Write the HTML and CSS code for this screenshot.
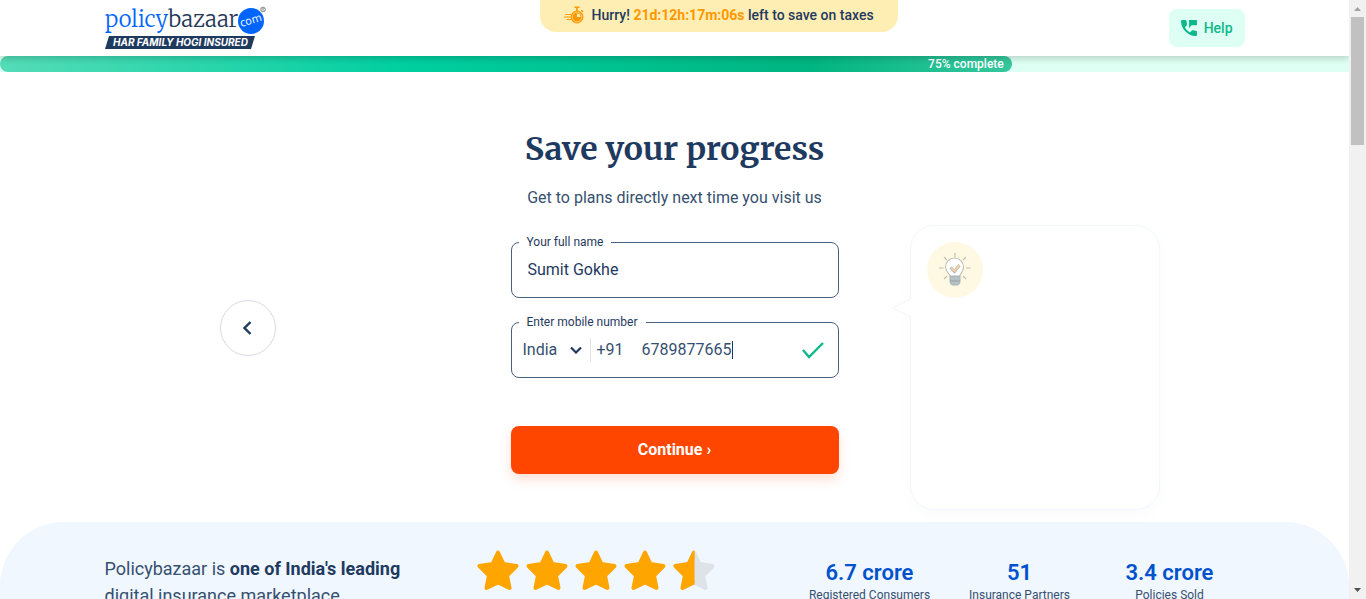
FILE: index.html
```html
<!DOCTYPE html>
<html lang="en">
<head>
<meta charset="utf-8">
<meta name="viewport" content="width=device-width, initial-scale=1">
<title>Policybazaar - Save your progress</title>
<link rel="stylesheet" href="styles.css">
</head>
<body>
<div class="page">
  <header class="header">
    <div class="container header-row">
      <a class="logo" href="#" aria-label="policybazaar.com">
        <svg width="162" height="46" viewBox="0 0 162 46">
          <text class="logo-name" x="0" y="22"><tspan fill="#0065ff">policy</tspan><tspan fill="#253858">bazaar</tspan></text>
          <circle cx="146" cy="16" r="13" fill="#0065ff"/>
          <text class="logo-com" x="146" y="19" transform="rotate(-17 146 16)">com</text>
          <circle cx="158" cy="4.500" r="2.300" fill="none" stroke="#555" stroke-width=".7"/>
          <text class="logo-reg" x="158" y="6">R</text>
          <path d="M4 31h146l-4 13H0z" fill="#1f3a5f"/>
          <text class="logo-tag" x="8" y="41">HAR FAMILY HOGI INSURED</text>
        </svg>
      </a>
      <a class="help" href="#">
        <svg width="16" height="16" viewBox="0 0 24 24" fill="#0db88b"><path d="M22.500 16l-4.600-.6c-.6-.1-1.200.1-1.600.5l-3 3A19 19 0 0 1 5.800 10.800l2.700-2.700c.4-.4.6-1 .5-1.600L8.400 2.100C8.300 1 7.400 0 6.300 0H2C.8 0 0 1 0 2.100 .7 14 10 23.300 21.900 24c1.100 0 2.100-.8 2.100-2v-4.100c0-1-.6-1.800-1.500-1.900zM12 0v12l4-4h6.500c.8 0 1.500-.7 1.500-1.500v-5c0-.8-.7-1.500-1.500-1.500z"/></svg>
        Help
      </a>
    </div>
    <p class="offer">
      <svg width="20" height="18" viewBox="0 0 20 18">
        <g fill="none" stroke="#ff9800">
          <circle cx="13" cy="11" r="6" fill="#ff9800" stroke-width="1"/>
          <circle cx="13" cy="11" r="4.800" stroke="#ffeeb3" stroke-width=".6"/>
          <path d="M10.500 1.300h5M13 1v4M17.300 4.300l1.800 1.700" stroke-width="1.600"/>
          <path d="M1.500 8.500H7M0 11h6.500M2.500 13.500H7" stroke-width="1"/>
        </g>
        <path d="M13 7.500V11h3.500A3.500 3.500 0 0 0 13 7.500z" fill="#ffeeb3"/>
      </svg>
      <span>Hurry! <strong>21d:12h:17m:06s</strong> left to save on taxes</span>
    </p>
  </header>
  <div class="progress" role="progressbar" aria-valuenow="75" aria-valuemin="0" aria-valuemax="100">
    <div class="progress-fill" style="width: 75%">75% complete</div>
  </div>
  <main class="container main">
    <button class="back" type="button" aria-label="Back">
      <svg width="12" height="16" viewBox="0 0 12 16"><path d="M8.500 2l-6 6 6 6" fill="none" stroke="#1f3a5f" stroke-width="2.400"/></svg>
    </button>
    <form class="form">
      <h1 class="title">Save your progress</h1>
      <p class="subtitle">Get to plans directly next time you visit us</p>
      <fieldset class="field">
        <legend><label for="name">Your full name</label></legend>
        <input class="input name-input" id="name" type="text" value="Sumit Gokhe">
      </fieldset>
      <fieldset class="field">
        <legend><label for="mobile">Enter mobile number</label></legend>
        <div class="phone">
          <span class="country">
            <select class="input" aria-label="Country"><option>India</option></select>
            <svg width="12" height="8" viewBox="0 0 12 8"><path d="M1 1.500l5 5 5-5" fill="none" stroke="#1f3a5f" stroke-width="2.200"/></svg>
          </span>
          <span class="code">+91</span>
          <span class="number"><input class="input number-input" id="mobile" type="tel" value="6789877665"><span class="caret"></span></span>
          <svg class="tick" width="24" height="18" viewBox="0 0 24 18"><path d="M2 9l6 7L22 2" fill="none" stroke="#0db88b" stroke-width="2.400"/></svg>
        </div>
      </fieldset>
      <button class="continue" type="button">Continue ›</button>
    </form>
    <aside class="tip">
      <svg class="tip-arrow" width="24" height="24" viewBox="0 0 24 24"><path d="M24 2.500H20L1.500 12l18.500 9h4z" fill="#fff"/><path d="M20 2.500L1.500 12l18.500 9" fill="none" stroke="#f0f6ff"/></svg>
      <div class="tip-icon">
        <svg width="32" height="34" viewBox="0 0 32 34">
          <g fill="none" stroke="#bfbcb2" stroke-width="1.100">
            <path d="M11.500 24c0-3-5-4.500-5-10a9 9 0 0 1 18 0c0 5.500-4 7-4 10z" fill="#fff"/>
            <path d="M16 0v4M5 4l3 3M27 4l-3 3M0 15h4.500M27 15h4.500M5 26l3-3M27 26l-3-3"/>
          </g>
          <path d="M11 23h10v5c0 2-1 4-2.500 4h-5C12 32 11 30 11 28z" fill="#b5c1c5" stroke="#a9b2b5"/>
          <path d="M11 28h10" stroke="#95a1a6"/>
          <path d="M11.500 14.500l4 4 5-6.500" fill="none" stroke="#b8b4ad" stroke-width="3"/>
          <path d="M12 15l3.500 3 5-6" fill="none" stroke="#ffd9a6" stroke-width="1.400"/>
        </svg>
      </div>
    </aside>
  </main>
  <section class="trust">
    <div class="container trust-row">
      <p class="trust-text">Policybazaar is <strong>one of India's leading</strong> digital insurance marketplace</p>
      <svg class="stars" width="240" height="44" viewBox="0 0 240 44" role="img" aria-label="4.5 out of 5 stars">
        <defs>
          <path id="star" d="M20 3.500L25.500 15l13 2-9.500 9.500L31.500 39 20 33.500 8.500 39 11 26.500 1.500 17l13-2z" transform="translate(1)" stroke-width="4" stroke-linejoin="round"/>
          <clipPath id="half"><path d="M-2 0h23.500v44H-2z"/></clipPath>
        </defs>
        <g fill="#ffa500" stroke="#ffa500">
          <use href="#star"/><use href="#star" x="49"/><use href="#star" x="98"/><use href="#star" x="147"/>
        </g>
        <g transform="translate(196)">
          <use href="#star" fill="#dde3e6" stroke="#dde3e6"/>
          <g clip-path="url(#half)"><use href="#star" fill="#ffa500" stroke="#ffa500"/></g>
        </g>
      </svg>
      <ul class="stats">
        <li><strong>6.7 crore</strong>Registered Consumers</li>
        <li><strong>51</strong>Insurance Partners</li>
        <li><strong>3.4 crore</strong>Policies Sold</li>
      </ul>
    </div>
  </section>
</div>
<div class="scrollbar" aria-hidden="true">
  <svg width="17" height="17" viewBox="0 0 17 17"><path d="M5 11h7L8.500 7z" fill="#a3a3a3"/></svg>
  <div class="scroll-thumb"></div>
  <svg width="17" height="17" viewBox="0 0 17 17"><path d="M5 6h7l-3.500 4z" fill="#505050"/></svg>
</div>
</body>
</html>
```
FILE: styles.css
```css
* {
  box-sizing: border-box;
}

body {
  margin: 0;
  display: flex;
  height: 100vh;
  overflow: hidden;
  font-family: Roboto, "Liberation Sans", sans-serif;
  font-size: 16px;
  line-height: 24px;
  color: #1f3a5f;
  background: #fff;
}

.page {
  flex: 1;
  min-width: 0;
  overflow: hidden;
}

.container {
  max-width: 1140px;
  margin: 0 auto;
}

/* Header */
.header {
  position: relative;
  z-index: 1;
  background: #fff;
  box-shadow: 0 3px 6px rgba(0, 0, 0, 0.16);
}

.header-row {
  display: flex;
  justify-content: space-between;
  align-items: center;
  height: 56px;
}

.logo svg {
  display: block;
}

.logo-name {
  font: 300 22px Merriweather, "Liberation Serif", serif;
}

.logo-com {
  font: 11px "Open Sans", sans-serif;
  fill: #fff;
  text-anchor: middle;
}

.logo-reg {
  font: 4px "Liberation Sans", sans-serif;
  fill: #555;
  text-anchor: middle;
}

.logo-tag {
  font: italic bold 10px Inter, sans-serif;
  fill: #fff;
}

.help {
  display: flex;
  align-items: center;
  gap: 7px;
  height: 38px;
  padding: 0 12px;
  border-radius: 8px;
  background: #defff3;
  color: #0db88b;
  font-size: 14px;
  font-weight: 500;
  text-decoration: none;
}

.offer {
  position: absolute;
  top: 0;
  left: 40%;
  display: flex;
  align-items: center;
  gap: 8px;
  height: 32px;
  margin: 0;
  padding: 0 24px 2px;
  border-radius: 0 0 16px 16px;
  background: #ffeeb3;
  font-size: 14px;
  font-weight: 500;
  white-space: nowrap;
}

.offer strong {
  color: #ff9800;
}

/* Progress */
.progress {
  height: 16px;
  background: #defff3;
}

.progress-fill {
  height: 16px;
  padding-right: 8px;
  border-radius: 8px;
  background: linear-gradient(90deg, #54dcb7 0%, #00cfa0 40%, #00b581 80%, #36c79d 100%);
  color: #fff;
  font-size: 12px;
  font-weight: 500;
  line-height: 16px;
  text-align: right;
}

/* Main */
.main {
  display: grid;
  grid-template-columns: 1fr 328px 1fr;
  align-items: start;
  padding-bottom: 12px;
}

.back {
  display: grid;
  place-items: center;
  width: 56px;
  height: 56px;
  margin: 228px 0 0 115px;
  padding: 0;
  border: 1px solid #d8dae2;
  border-radius: 50%;
  background: #fff;
}

.title {
  margin: 57px 0 0;
  font: bold 32px/40px Merriweather, "DejaVu Serif Condensed", "DejaVu Serif", serif;
  text-align: center;
  white-space: nowrap;
}

.subtitle {
  margin: 17px 0 24px;
  color: #36506f;
  text-align: center;
}

.field {
  min-width: 0;
  margin: 0 0 16px;
  padding: 0 7px 8px;
  border: 1px solid #4a607e;
  border-radius: 8px;
}

.field legend {
  padding: 0 8px;
  font-size: 12px;
  line-height: 16px;
}

.input {
  display: block;
  height: 39px;
  padding: 0;
  border: 0;
  outline: 0;
  background: transparent;
  color: #1f3a5f;
  font: inherit;
}

.name-input {
  width: 100%;
  padding: 0 9px;
}

.phone {
  display: flex;
  align-items: center;
  padding: 0 6px 0 4px;
}

.country {
  display: flex;
  align-items: center;
}

.country select {
  width: 47px;
  appearance: none;
  color: #36506f;
}

.code {
  margin-left: 8px;
  padding-left: 6px;
  border-left: 1px solid #dfe1e6;
  color: #36506f;
}

.number {
  display: flex;
  flex: 1;
  align-items: center;
  padding-left: 18px;
}

.number-input {
  width: 90px;
  color: #36506f;
}

.caret {
  width: 1px;
  height: 18px;
  background: #1f3a5f;
}

.continue {
  display: block;
  width: 100%;
  height: 48px;
  margin-top: 48px;
  border: 0;
  border-radius: 8px;
  background: #ff4600;
  box-shadow: 0 6px 12px rgba(255, 70, 0, 0.16);
  color: #fff;
  font: bold 16px/24px Roboto, sans-serif;
}

.tip {
  position: relative;
  width: 250px;
  height: 285px;
  margin: 153px 0 0 71px;
  padding: 16px;
  border: 1px solid #f0f6ff;
  border-radius: 24px;
  box-shadow: 0 6px 16px rgba(37, 56, 88, 0.02);
}

.tip-arrow {
  position: absolute;
  top: 70px;
  right: 100%;
  margin-right: -4px;
}

.tip-icon {
  display: grid;
  place-items: center;
  width: 56px;
  height: 56px;
  border-radius: 50%;
  background: #fff9e4;
}

/* Trust strip */
.trust {
  height: 160px;
  padding-top: 25px;
  border-radius: 64px 64px 0 0;
  background: #f0f7ff;
}

.trust-row {
  display: grid;
  grid-template-columns: 372px 1fr 450px;
  align-items: start;
}

.trust-text {
  max-width: 310px;
  margin: 8px 0 0;
  font-size: 18px;
  line-height: 27px;
  color: #36506f;
}

.trust-text strong {
  color: #1f3a5f;
}

.stars {
  margin-top: 2px;
}

.stats {
  display: grid;
  grid-template-columns: repeat(3, 1fr);
  margin: 12px 0 0;
  padding: 0;
  list-style: none;
  color: #36506f;
  font-size: 12px;
  line-height: 16px;
  text-align: center;
}

.stats strong {
  display: block;
  color: #0052cc;
  font-size: 22px;
  font-weight: 600;
  line-height: 28px;
}

/* Scrollbar */
.scrollbar {
  display: flex;
  flex-direction: column;
  justify-content: space-between;
  width: 17px;
  background: #f1f1f1;
}

.scrollbar svg {
  display: block;
}

.scroll-thumb {
  height: 128px;
  margin: 0 2px auto;
  background: #c1c1c1;
}
```
